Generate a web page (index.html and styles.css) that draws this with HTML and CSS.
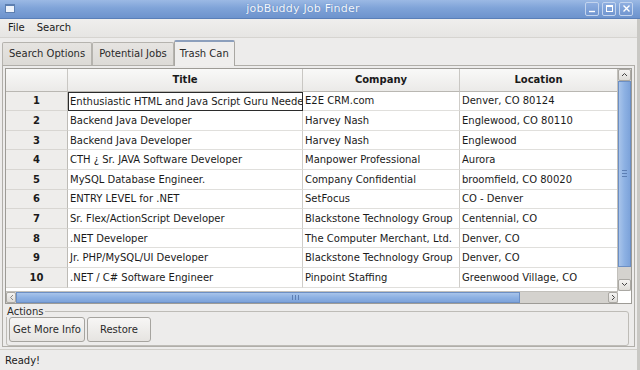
FILE: index.html
```html
<!DOCTYPE html>
<html lang="en">
<head>
	<meta charset="UTF-8">
	<title>jobBuddy Job Finder</title>
	<link rel="stylesheet" href="styles.css">
</head>
<body>
	<div class="window">
		<header class="titlebar">
			<span class="app-icon"></span>
			<span class="title">jobBuddy Job Finder</span>
			<div class="wm-buttons">
				<span class="wm-btn"><svg width="9" height="9" viewBox="0 0 9 9"><path d="M1 7.5h6" stroke="#fff" stroke-width="1.4"/></svg></span>
				<span class="wm-btn"><svg width="9" height="9" viewBox="0 0 9 9"><rect x="1.5" y="1.5" width="6" height="6" fill="none" stroke="#fff" stroke-width="1"/><path d="M1.5 2.5h6" stroke="#fff"/></svg></span>
				<span class="wm-btn"><svg width="9" height="9" viewBox="0 0 9 9"><path d="M1.5 1.5l6 6M7.5 1.5l-6 6" stroke="#fff" stroke-width="1.4"/></svg></span>
			</div>
		</header>

		<nav class="menubar">
			<span>File</span>
			<span>Search</span>
		</nav>

		<div class="tabs">
			<span class="tab">Search Options</span>
			<span class="tab">Potential Jobs</span>
			<span class="tab active">Trash Can</span>
		</div>

		<section class="panel">
			<div class="table-frame">
				<div class="table-area">
					<div class="grid">
						<div class="hd corner"></div>
						<div class="hd">Title</div>
						<div class="hd">Company</div>
						<div class="hd">Location</div>

						<div class="num">1</div><div class="cell focus">Enthusiastic HTML and Java Script Guru Neede</div><div class="cell">E2E CRM.com</div><div class="cell">Denver, CO 80124</div>
						<div class="num">2</div><div class="cell">Backend Java Developer</div><div class="cell">Harvey Nash</div><div class="cell">Englewood, CO 80110</div>
						<div class="num">3</div><div class="cell">Backend Java Developer</div><div class="cell">Harvey Nash</div><div class="cell">Englewood</div>
						<div class="num">4</div><div class="cell">CTH ¿ Sr. JAVA Software Developer</div><div class="cell">Manpower Professional</div><div class="cell">Aurora</div>
						<div class="num">5</div><div class="cell">MySQL Database Engineer.</div><div class="cell">Company Confidential</div><div class="cell">broomfield, CO 80020</div>
						<div class="num">6</div><div class="cell">ENTRY LEVEL for .NET</div><div class="cell">SetFocus</div><div class="cell">CO - Denver</div>
						<div class="num">7</div><div class="cell">Sr. Flex/ActionScript Developer</div><div class="cell">Blackstone Technology Group</div><div class="cell">Centennial, CO</div>
						<div class="num">8</div><div class="cell">.NET Developer</div><div class="cell">The Computer Merchant, Ltd.</div><div class="cell">Denver, CO</div>
						<div class="num">9</div><div class="cell">Jr. PHP/MySQL/UI Developer</div><div class="cell">Blackstone Technology Group</div><div class="cell">Denver, CO</div>
						<div class="num">10</div><div class="cell">.NET / C# Software Engineer</div><div class="cell">Pinpoint Staffing</div><div class="cell">Greenwood Village, CO</div>
					</div>
					<div class="vscroll">
						<span class="arrow up"><svg width="7" height="5" viewBox="0 0 7 5"><path d="M1 4l2.5-2.5L6 4" fill="none" stroke="#444"/></svg></span>
						<span class="vthumb"><i></i><i></i><i></i></span>
						<span class="vtrough"></span>
						<span class="arrow down"><svg width="7" height="5" viewBox="0 0 7 5"><path d="M1 1l2.5 2.5L6 1" fill="none" stroke="#444"/></svg></span>
					</div>
				</div>
				<div class="hscroll">
					<span class="arrow left"><svg width="5" height="7" viewBox="0 0 5 7"><path d="M4 1L1.5 3.5 4 6" fill="none" stroke="#888"/></svg></span>
					<span class="hthumb"><i></i><i></i><i></i></span>
					<span class="htrough"></span>
					<span class="arrow right"><svg width="5" height="7" viewBox="0 0 5 7"><path d="M1 1l2.5 2.5L1 6" fill="none" stroke="#444"/></svg></span>
				</div>
			</div>

			<fieldset class="actions">
				<legend>Actions</legend>
				<button>Get More Info</button>
				<button class="restore">Restore</button>
			</fieldset>
		</section>

		<footer class="status">Ready!</footer>
	</div>
</body>
</html>
```

FILE: styles.css
```css
* {
	margin: 0;
	box-sizing: border-box;
}
body {
	width: 640px;
	height: 370px;
	overflow: hidden;
	background-color: #edeceb;
	font-family: "DejaVu Sans", sans-serif;
	font-size: 10px;
	color: #1a1a1a;
}
.window {
	height: 370px;
	border-right: 3px solid #c9c8c4;
	display: flex;
	flex-direction: column;
}

/* title bar */
.titlebar {
	height: 19px;
	display: flex;
	align-items: center;
	padding: 0 7px 0 5px;
	background: linear-gradient(#9bb9e4, #7fa3d8 45%, #6d93cd);
	border-bottom: 1px solid #5a7fb8;
	margin-right: -3px;
}
.app-icon {
	width: 10px;
	height: 9px;
	background: #eef3fb;
	border: 1px solid #5d7fb0;
	border-top-width: 2px;
}
.titlebar .title {
	flex: 1;
	text-align: center;
	color: #f4f8ff;
	font-size: 11px;
	letter-spacing: 0.2px;
	text-shadow: 0 0 1px #4d72aa;
	padding-left: 6px;
}
.wm-buttons {
	display: flex;
	gap: 3px;
}
.wm-btn {
	width: 14px;
	height: 14px;
	border: 1px solid #c3d4ee;
	border-radius: 2px;
	background: linear-gradient(#8eaee0, #7196d0);
	display: flex;
	align-items: center;
	justify-content: center;
}

/* menu */
.menubar {
	height: 19px;
	display: flex;
	align-items: center;
	gap: 12px;
	padding-left: 8px;
	font-size: 10px;
	background: linear-gradient(#efeeed, #e6e5e3);
	border-bottom: 1px solid #d6d4d0;
}

/* tabs */
.tabs {
	display: flex;
	align-items: flex-end;
	height: 26px;
	padding-left: 2px;
	margin-top: 1px;
}
.tab {
	height: 23px;
	line-height: 22px;
	padding: 0 6px;
	border: 1px solid #b5b3ae;
	border-bottom: none;
	border-radius: 2px 2px 0 0;
	background: linear-gradient(#e6e4e1, #dcdad6);
	color: #2a2a2a;
}
.tab.active {
	height: 26px;
	line-height: 24px;
	padding: 0 5px;
	background: #efeeed;
	border-color: #a9a7a2;
	border-top: 2px solid #8c9fbc;
	position: relative;
	top: 1px;
}

/* panel */
.panel {
	margin: 0 2px 0 2px;
	height: 285px;
	border: 1px solid #b0aea9;
	padding: 2px 2px 0 2px;
	background: #edeceb;
}
.table-frame {
	border: 1px solid #9d9b96;
	height: 236px;
	background: #fff;
	display: flex;
	flex-direction: column;
}
.table-area {
	display: flex;
	height: 223px;
}
.grid {
	flex: 1;
	display: grid;
	grid-template-columns: 62px 235px 157px 158px;
	grid-template-rows: 23px repeat(10, 19.6px);
	overflow: hidden;
}
.hd {
	display: flex;
	align-items: center;
	justify-content: center;
	font-weight: bold;
	background: linear-gradient(#f9f9f8, #ebeae8);
	border-right: 1px solid #c9c7c3;
	border-bottom: 1px solid #b9b7b2;
}
.num {
	display: flex;
	align-items: center;
	justify-content: center;
	font-weight: bold;
	background: #eeedeb;
	border-right: 1px solid #bdbbb6;
	border-bottom: 1px solid #d8d6d2;
}
.cell {
	display: flex;
	align-items: center;
	padding-left: 2px;
	white-space: nowrap;
	overflow: hidden;
	border-right: 1px solid #cfcdc9;
	border-bottom: 1px solid #e0dfdc;
}
.cell.focus {
	border: 1px solid #2b2b2b;
	padding-left: 1px;
}

/* scrollbars */
.vscroll {
	width: 14px;
	display: flex;
	flex-direction: column;
	background: #d4d2ce;
	border-left: 1px solid #c2c0bb;
}
.arrow {
	display: flex;
	align-items: center;
	justify-content: center;
	background: linear-gradient(#f4f3f2, #dedcd8);
	border: 1px solid #aaa8a3;
	border-radius: 2px;
}
.vscroll .arrow {
	height: 12px;
}
.vthumb {
	flex: 1;
	background: linear-gradient(to right, #a8c4ea, #8db1e3 50%, #7da3da);
	border: 1px solid #6c8fc4;
	display: flex;
	flex-direction: column;
	align-items: center;
	justify-content: center;
	gap: 2px;
}
.vthumb i {
	width: 5px;
	height: 1px;
	background: #5c7eb3;
}
.vtrough {
	height: 12px;
}
.hscroll {
	height: 12px;
	display: flex;
	background: #d4d2ce;
	border-top: 1px solid #c2c0bb;
	margin-right: 13px;
}
.hscroll .arrow {
	width: 10px;
}
.hthumb {
	width: 504px;
	background: linear-gradient(#a8c4ea, #8db1e3 50%, #7da3da);
	border: 1px solid #6c8fc4;
	display: flex;
	align-items: center;
	justify-content: flex-end;
	gap: 2px;
	padding-right: 220px;
}
.hthumb i {
	width: 1px;
	height: 5px;
	background: #5c7eb3;
}
.htrough {
	flex: 1;
}

/* actions */
.actions {
	margin: 2px 3px 0 1px;
	border: 1px solid #bebcb7;
	border-radius: 3px;
	padding: 0 2px 3px 2px;
	height: 40px;
	display: flex;
	gap: 2px;
}
.actions legend {
	padding: 0 1px;
	margin-left: -3px;
	font-size: 10px;
	color: #2a2a2a;
}
.actions button {
	font-family: "DejaVu Sans", sans-serif;
	font-size: 10px;
	color: #2a2a2a;
	height: 25px;
	padding: 0 3px;
	border: 1px solid #a6a49f;
	border-radius: 3px;
	background: linear-gradient(#f7f6f5, #e6e4e1);
}
.actions .restore {
	width: 64px;
}

/* status */
.status {
	margin-top: 2px;
	border-top: 1px solid #d0cec9;
	padding: 5px 5px 4px;
	font-size: 10px;
}
```
